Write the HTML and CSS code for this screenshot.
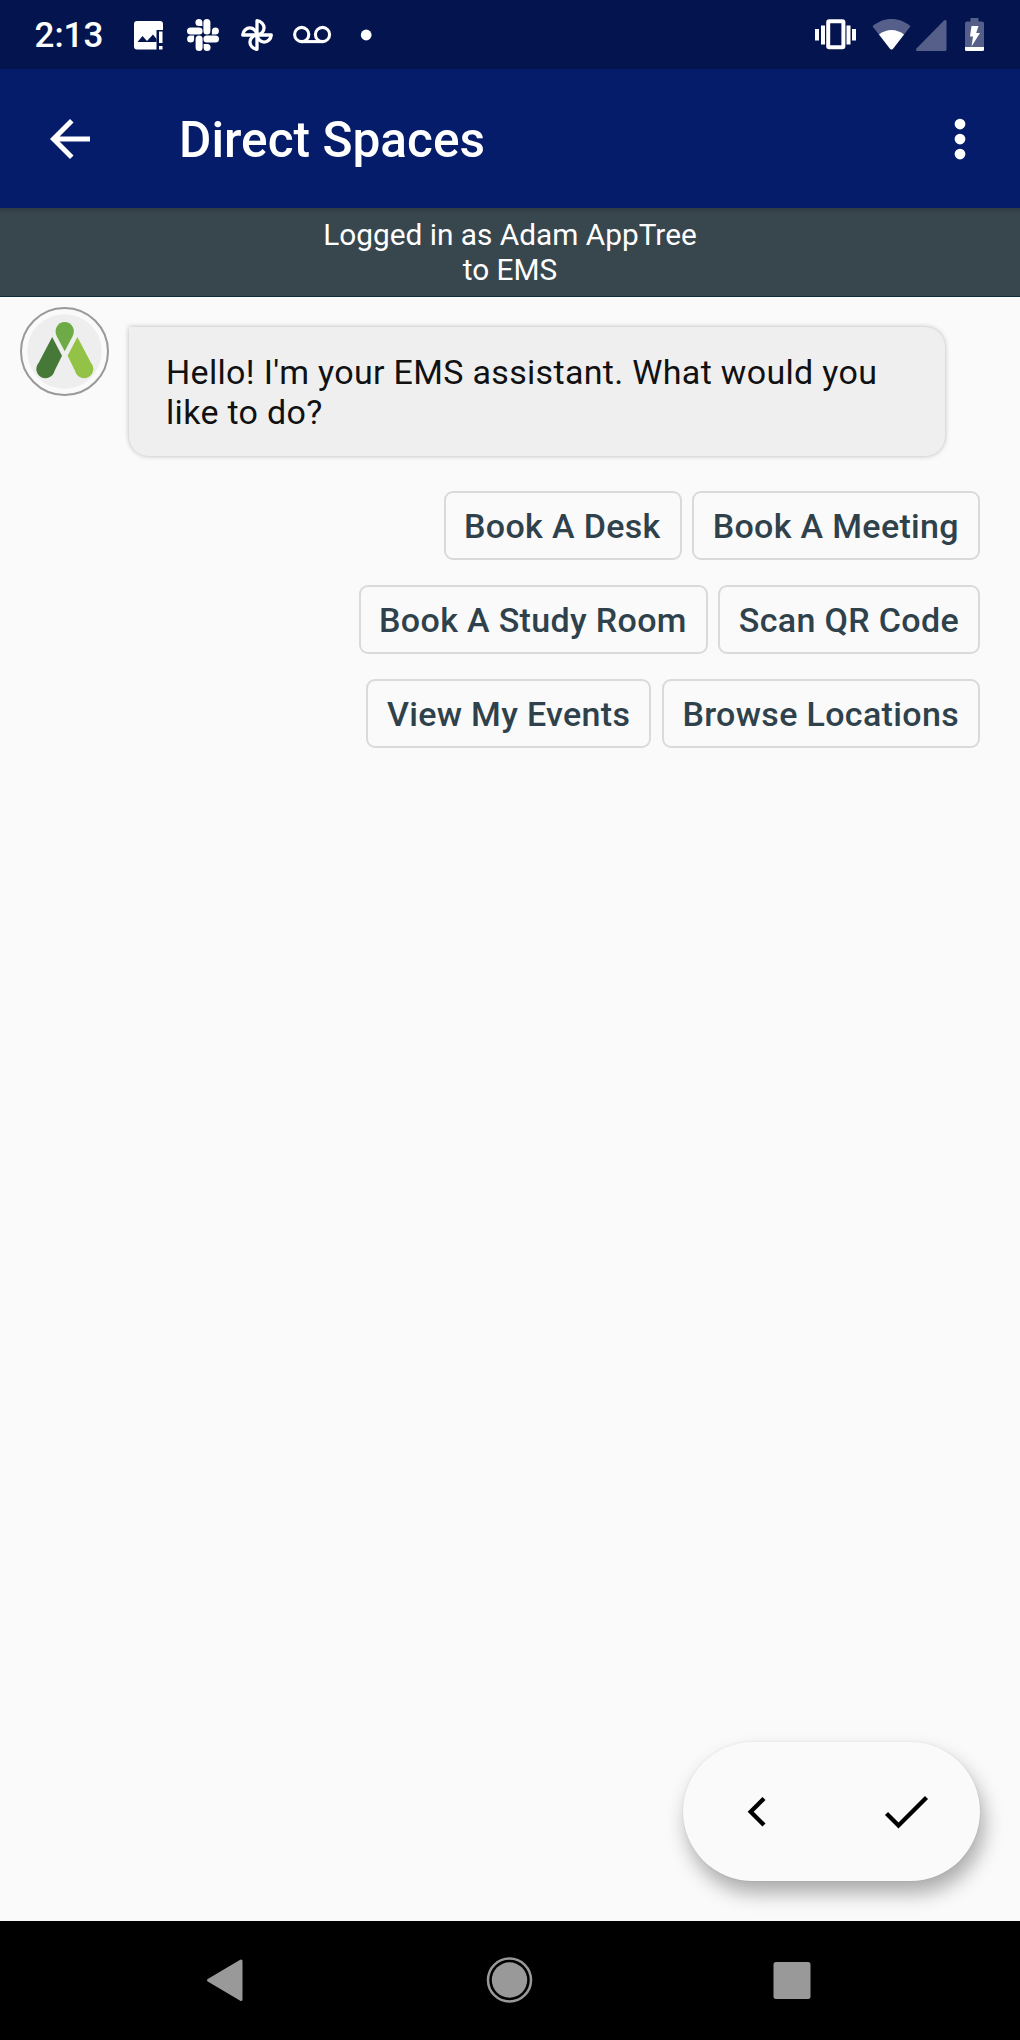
FILE: index.html
```html
<!DOCTYPE html>
<html lang="en">
<head>
  <meta charset="UTF-8">
  <meta name="viewport" content="width=device-width, initial-scale=1.0">
  <title>Direct Spaces</title>
  <link rel="stylesheet" href="styles.css">
</head>
<body>
  <div class="screen">
    <div class="status-bar">
      <span class="clock">2:13</span>
      <div class="notifications">
        <!-- screenshot -->
        <svg width="54" height="54" viewBox="0 0 54 54">
          <path fill="#fff" d="M16 13h23a3 3 0 0 1 3 3v6h-6.500v19.500H16a3 3 0 0 1-3-3V16a3 3 0 0 1 3-3z"/>
          <path fill="#04144e" d="M16.500 34l5-6 4.500 5 6-6.500 3.500 4.500v3z"/>
          <path fill="#fff" d="M38 23.500h3.500V35H38zM38 38h3.500v3.500H38z"/>
        </svg>
        <!-- slack -->
        <svg width="54" height="54" viewBox="0.500 0.500 54 54">
          <g id="slack-arm">
            <path stroke="#fff" stroke-width="7" stroke-linecap="round" d="M31.400 15v8.600"/>
            <path fill="#fff" d="M26.900 18.600h-3.500a3.500 3.500 0 1 1 3.500-3.500z"/>
          </g>
          <use href="#slack-arm" transform="rotate(90 27.500 27.500)"/>
          <use href="#slack-arm" transform="rotate(180 27.500 27.500)"/>
          <use href="#slack-arm" transform="rotate(270 27.500 27.500)"/>
        </svg>
        <!-- photos -->
        <svg width="54" height="54" viewBox="0.500 0.500 54 54">
          <path id="photos-blade" fill="none" stroke="#fff" stroke-width="3.300" stroke-linejoin="round" d="M27.500 27.500V13.200a8 7.200 0 0 1 0 14.300z"/>
          <use href="#photos-blade" transform="rotate(90 27.500 27.500)"/>
          <use href="#photos-blade" transform="rotate(180 27.500 27.500)"/>
          <use href="#photos-blade" transform="rotate(270 27.500 27.500)"/>
        </svg>
        <!-- voicemail -->
        <svg width="54" height="54" viewBox="0.500 0 54 54">
          <g fill="none" stroke="#fff" stroke-width="3.100">
            <circle cx="17.200" cy="26.500" r="7.100"/>
            <circle cx="38" cy="26.500" r="7.100"/>
            <path d="M17 33.600h21"/>
          </g>
        </svg>
        <svg width="54" height="54" viewBox="0 0 54 54">
          <circle cx="27.200" cy="27" r="5.400" fill="#fff"/>
        </svg>
      </div>
      <div class="indicators">
        <svg class="vibrate" width="42" height="34" viewBox="0 0 42 34">
          <rect x="13.200" y="3.200" width="15.200" height="26" rx="1" fill="none" stroke="#fff" stroke-width="4"/>
          <path fill="#fff" d="M0 11h4v11.500H0zM6 7.500h4v19H6zM31.500 7.500h4v19h-4zM37 11h4v11.500h-4z"/>
        </svg>
        <svg class="wifi" width="39" height="34" viewBox="0 0 39 34">
          <path fill="#555f8a" d="M19.500 31.500c-.6 0-1.100-.2-1.500-.7L.5 8.300C6 3.500 12.500 1 19.500 1s13.500 2.500 19 7.300L21 30.800c-.4.500-.9.700-1.500.7z"/>
          <path fill="#fff" d="M19.500 31.500c-.6 0-1.100-.2-1.500-.7L7 16.600c3.800-3 8-4.600 12.500-4.600S28.200 13.600 32 16.600L21 30.800c-.4.500-.9.700-1.500.7z"/>
        </svg>
        <svg class="signal" width="31" height="34" viewBox="0 0 31 34">
          <path fill="#555f8a" d="M30.500 3.500v28a1.500 1.500 0 0 1-1.500 1.500H1.500C.2 33-.4 31.600.5 30.600L28 2.600c1-1 2.500-.5 2.500.9z"/>
        </svg>
        <svg class="battery" width="19" height="34" viewBox="0 0 19 34">
          <path fill="#555f8a" d="M5.500 0h8v3.500H17a2 2 0 0 1 2 2V29H0V5.500a2 2 0 0 1 2-2h3.500z"/>
          <path fill="#fff" d="M0 29h19v2.500a1.500 1.500 0 0 1-1.500 1.500h-16A1.500 1.500 0 0 1 0 31.500z"/>
          <path fill="#fff" d="M6.500 8h7l-2.300 7H15L6.500 28.500 8 18.500H5z"/>
        </svg>
      </div>
    </div>

    <div class="app-bar">
      <svg class="back" width="60" height="60" viewBox="0 0 24 24">
        <path fill="#fff" d="M20 11H7.830l5.590-5.590L12 4l-8 8 8 8 1.410-1.410L7.830 13H20v-2z"/>
      </svg>
      <h1>Direct Spaces</h1>
      <svg class="more" width="60" height="60" viewBox="0 0 24 24">
        <g fill="#fff">
          <circle cx="12" cy="6" r="2.150"/>
          <circle cx="12" cy="12" r="2.150"/>
          <circle cx="12" cy="18" r="2.150"/>
        </g>
      </svg>
    </div>

    <div class="login-banner">Logged in as Adam AppTree<br>to EMS</div>

    <div class="chat">
      <div class="message-row">
        <div class="avatar">
          <svg width="75" height="75" viewBox="0 0 75 75">
            <circle cx="37.500" cy="37.500" r="37.300" fill="#eee"/>
            <path fill="#6eab46" d="M37.700 37.200L29.900 22.500C26.200 15.500 30.700 8 37.700 8s11.500 7.500 7.800 14.500z"/>
            <path fill="#467838" d="M25.200 23l9.800 18.700-7.500 15.300A9.200 9.200 0 1 1 11.700 48.800z"/>
            <path fill="#92c346" d="M50.400 23l-9.800 18.700 7.500 15.300A9.200 9.200 0 1 0 63.900 48.800z"/>
          </svg>
        </div>
        <div class="bubble">Hello! I'm your EMS assistant. What would you like to do?</div>
      </div>

      <div class="options">
        <div class="option-row">
          <button class="option">Book A Desk</button>
          <button class="option">Book A Meeting</button>
        </div>
        <div class="option-row">
          <button class="option">Book A Study Room</button>
          <button class="option">Scan QR Code</button>
        </div>
        <div class="option-row">
          <button class="option">View My Events</button>
          <button class="option">Browse Locations</button>
        </div>
      </div>

      <div class="actions">
        <svg width="60" height="60" viewBox="0 0 60 60">
          <path fill="none" stroke="#000" stroke-width="4.300" d="M37 16.500L23.700 29.800 37 43.100"/>
        </svg>
        <svg width="60" height="60" viewBox="0 0 60 60">
          <path fill="none" stroke="#000" stroke-width="4.300" d="M10.500 31.500l12 12 28-28"/>
        </svg>
      </div>
    </div>

    <div class="nav-bar">
      <svg width="60" height="60" viewBox="0 0 60 60">
        <path fill="#999" stroke="#999" stroke-width="3" stroke-linejoin="round" d="M13.500 30.300L46 11v38.500z"/>
      </svg>
      <svg width="60" height="60" viewBox="0 0 60 60">
        <circle cx="30.500" cy="30" r="21.500" fill="none" stroke="#999" stroke-width="2.500"/>
        <circle cx="30.500" cy="30" r="17.700" fill="#999"/>
      </svg>
      <svg width="60" height="60" viewBox="0 0 60 60">
        <rect x="11.500" y="12" width="37" height="37" rx="2.500" fill="#999"/>
      </svg>
    </div>
  </div>
</body>
</html>
```

FILE: styles.css
```css
* {
  box-sizing: border-box;
}
body {
  margin: 0;
  font-family: Roboto, sans-serif;
  background-color: #fafafa;
}
svg {
  display: block;
  flex-shrink: 0;
}
.screen {
  width: 1020px;
  height: 2040px;
  display: flex;
  flex-direction: column;
  overflow: hidden;
}

/* Status bar */
.status-bar {
  height: 69px;
  flex-shrink: 0;
  display: flex;
  align-items: center;
  padding: 0 36px 0 34px;
  background-color: #04144e;
  color: #fff;
}
.clock {
  width: 87px;
  font-size: 35px;
  font-weight: 500;
  line-height: 40px;
  padding: 3px 0 0 0.5px;
  white-space: nowrap;
}
.notifications {
  display: flex;
  gap: 0.5px;
}
.indicators {
  display: flex;
  margin-left: auto;
}
.wifi {
  margin-left: 15px;
}
.signal {
  margin-left: 5px;
}
.battery {
  margin-left: 18px;
}

/* App bar */
.app-bar {
  height: 139px;
  flex-shrink: 0;
  display: flex;
  align-items: center;
  padding: 0 30px 0 39.5px;
  background-color: #051c6b;
  color: #fff;
}
.app-bar h1 {
  margin: 0 auto 0 79.5px;
  font-size: 49.6px;
  font-weight: 500;
  line-height: 58px;
  padding-top: 3px;
}

.login-banner {
  height: 89px;
  flex-shrink: 0;
  padding-top: 9px;
  background: linear-gradient(#303c42, #38464e 6px);
  border-bottom: 1px solid #0f2e38;
  color: #fff;
  font-size: 29.8px;
  line-height: 35px;
  text-align: center;
}

/* Chat */
.chat {
  flex: 1;
  display: flex;
  flex-direction: column;
  padding: 10px 40px 40px 20px;
}
.message-row {
  display: flex;
  align-items: flex-start;
}
.avatar {
  width: 89px;
  height: 89px;
  display: flex;
  align-items: center;
  justify-content: center;
  border: 2px solid #999;
  border-radius: 50%;
}
.bubble {
  width: 816px;
  height: 129px;
  margin: 20px 0 0 20px;
  padding: 26px 37px;
  border-radius: 0 20px 20px 20px;
  background-color: #efefef;
  box-shadow: 0 0 5px rgba(0, 0, 0, 0.27);
  color: #111;
  font-size: 34px;
  letter-spacing: 0.32px;
  line-height: 39.7px;
}
.options {
  display: flex;
  flex-direction: column;
  gap: 25.5px;
  margin-top: 35px;
}
.option-row {
  display: flex;
  justify-content: flex-end;
  gap: 10.5px;
}
.option {
  height: 68.7px;
  padding: 1px 19px 0 18.5px;
  border: 2px solid #dadada;
  border-radius: 9px;
  background-color: transparent;
  color: #2f424c;
  font-family: inherit;
  font-size: 34px;
  font-weight: 500;
  letter-spacing: 0.34px;
  white-space: nowrap;
}
.actions {
  width: 297px;
  height: 139px;
  margin: auto 0 0 auto;
  display: flex;
  align-items: center;
  justify-content: space-around;
  border-radius: 70px;
  background-color: #fafafa;
  box-shadow: 4px 12px 20px rgba(0, 0, 0, 0.32), 0 0 2px rgba(0, 0, 0, 0.1);
}

/* Navigation bar */
.nav-bar {
  height: 119px;
  flex-shrink: 0;
  display: flex;
  align-items: center;
  justify-content: space-between;
  padding: 0 198px 1px 195px;
  background-color: #000;
}
```
